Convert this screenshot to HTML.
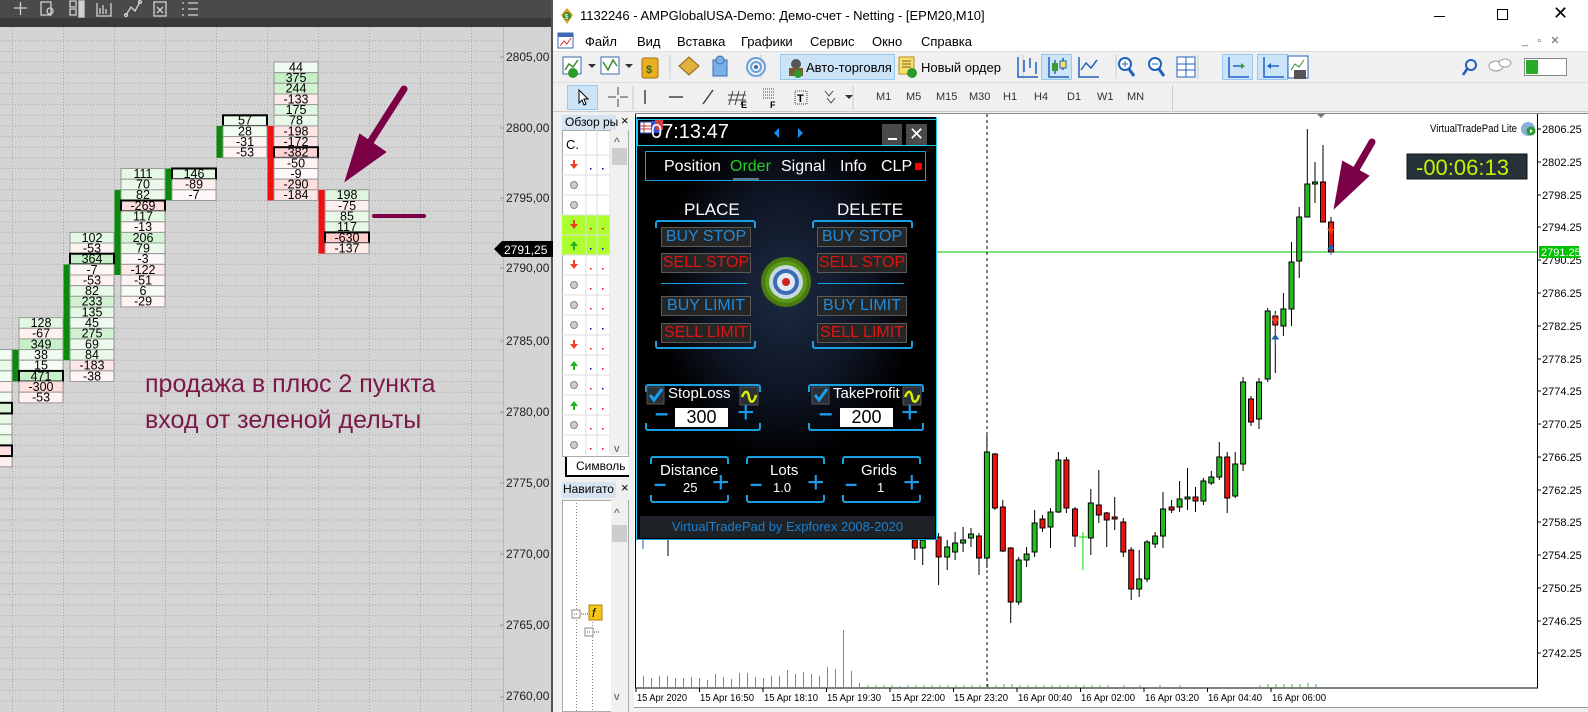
<!DOCTYPE html>
<html><head><meta charset="utf-8">
<style>
*{margin:0;padding:0;box-sizing:border-box}
body{width:1588px;height:712px;overflow:hidden;background:#f0f0f0;font-family:"Liberation Sans","DejaVu Sans",sans-serif;position:relative}
.a{position:absolute;white-space:nowrap}
.mi{font-size:13px;color:#000;top:34px}
.tf{font-size:11px;color:#333;top:91px}
.btn{position:absolute;width:90px;height:20px;background:#262626;border:1px solid #5a5a5a;font-size:16px;line-height:18px;text-align:center;color:#1e8ce0}
.btn.r{color:#e01414}
.brk{position:absolute;border:2px solid #1aa0e0;height:8px}
.brk.t{border-bottom:none;border-radius:3px 3px 0 0}
.brk.b{border-top:none;border-radius:0 0 3px 3px}
.pm{position:absolute;color:#1a9be8;font-weight:bold}
.wt{color:#fff;position:absolute;white-space:nowrap}
</style></head><body>

<!-- LEFT FOOTPRINT PANEL -->
<div class="a" style="left:0;top:0;width:551px;height:712px;background:#d4d4d4"></div>
<div class="a" style="left:0;top:0;width:551px;height:18px;background:#4a4a4a"></div>
<div class="a" style="left:0;top:18px;width:551px;height:9px;background:#3a3a3a"></div>
<div class="a" style="left:551px;top:0;width:2px;height:712px;background:#555"></div>

<svg class="a" style="left:0;top:0" width="553" height="712" xmlns="http://www.w3.org/2000/svg" font-family="Liberation Sans, sans-serif">
<g stroke="#d0d0d0" stroke-width="1.3" fill="none">
<path d="M14 8h13M20.5 2v13"/>
<rect x="41" y="2" width="10" height="13"/><circle cx="50" cy="11" r="3"/>
<path d="M70 1h6v6h-6zM70 9h6v6h-6z"/><rect x="79" y="1" width="5" height="16" fill="#d0d0d0"/>
<path d="M97 3v13h14v-13M100 14v-6M103 14v-9M106 14v-5"/>
<path d="M126 15l5-8 4 4 5-9"/><circle cx="126" cy="15" r="1.5"/><circle cx="140" cy="2" r="1.5"/>
<rect x="154" y="2" width="12" height="14"/><path d="M157 7l6 6M163 7l-6 6"/>
<path d="M182 3h2M182 9h2M182 15h2M188 3h10M188 9h10M188 15h10"/>
</g>
<g stroke="#a8a8a8" stroke-width="1" stroke-dasharray="1,2">
<path d="M12.5 27V712M63.5 27V712M114.5 27V712M165.5 27V712M216.5 27V712M267.5 27V712M318.5 27V712M369.5 27V712M420.5 27V712M471.5 27V712"/>
<path d="M0 40.7H503M0 51.4H503M0 62H503M0 72.7H503M0 83.3H503M0 94H503M0 104.6H503M0 115.3H503M0 125.9H503M0 136.6H503M0 147.2H503M0 157.9H503M0 168.5H503M0 179.2H503M0 189.8H503M0 200.5H503M0 211.1H503M0 221.8H503M0 232.4H503M0 243H503M0 253.7H503M0 264.4H503M0 275H503M0 285.7H503M0 296.3H503M0 307H503M0 317.6H503M0 328.3H503M0 338.9H503M0 349.6H503M0 360.2H503M0 370.9H503M0 381.5H503M0 392.2H503M0 402.8H503M0 413.5H503M0 424.1H503M0 434.8H503M0 445.4H503M0 456.1H503M0 466.7H503M0 477.4H503M0 488H503M0 498.7H503M0 509.3H503M0 520H503M0 530.6H503M0 541.3H503M0 551.9H503M0 562.6H503M0 573.2H503M0 583.9H503M0 594.5H503M0 605.2H503M0 615.8H503M0 626.5H503M0 637.1H503M0 647.8H503M0 658.4H503M0 669.1H503M0 679.7H503M0 690.4H503M0 701H503"/>
</g>
<path d="M503.5 27V712" stroke="#b8b8b8"/>
<g font-size="12" fill="#222">
<text x="506" y="61">2805,00</text><text x="506" y="132">2800,00</text><text x="506" y="202">2795,00</text><text x="506" y="272">2790,00</text>
<text x="506" y="345">2785,00</text><text x="506" y="416">2780,00</text><text x="506" y="487">2775,00</text><text x="506" y="558">2770,00</text>
<text x="506" y="629">2765,00</text><text x="506" y="700">2760,00</text>
</g>
<g stroke="#999"><path d="M500 57h4M500 128h4M500 198h4M500 268h4M500 341h4M500 412h4M500 483h4M500 554h4M500 625h4M500 697h4"/></g>
<path d="M494 249l8-8h51v16h-51z" fill="#000"/>
<text x="504" y="254" font-size="12" fill="#fff">2791,25</text>

<rect x="12.5" y="349.6" width="6" height="31.9" fill="#0a8a0a"/>
<rect x="63.5" y="264.4" width="6" height="95.8" fill="#0a8a0a"/>
<rect x="114.5" y="189.8" width="6" height="85.2" fill="#0a8a0a"/>
<rect x="165.5" y="168.5" width="6" height="31.9" fill="#0a8a0a"/>
<rect x="216.5" y="125.9" width="6" height="31.9" fill="#0a8a0a"/>
<rect x="267.5" y="125.9" width="6" height="74.6" fill="#f01010"/>
<rect x="318.5" y="189.8" width="6" height="63.9" fill="#f01010"/>

<g font-size="12.5" text-anchor="middle" stroke-width="1">
<g stroke="#999">
<rect x="-30" y="349.6" width="42" height="10.65" fill="#f2fdf2"/><rect x="-30" y="360.2" width="42" height="10.65" fill="#e6fae6"/>
<rect x="-30" y="370.9" width="42" height="10.65" fill="#f2fdf2"/><rect x="-30" y="381.5" width="42" height="10.65" fill="#fff0f0"/>
<rect x="-30" y="392.2" width="42" height="10.65" fill="#f2fdf2"/><rect x="-30" y="413.5" width="42" height="10.65" fill="#e6fae6"/>
<rect x="-30" y="424.1" width="42" height="10.65" fill="#f2fdf2"/><rect x="-30" y="434.8" width="42" height="10.65" fill="#e6fae6"/>
<rect x="-30" y="456.1" width="42" height="10.65" fill="#fff0f0"/>
</g>
<rect x="-30" y="402.8" width="42" height="10.65" fill="#d8f5d8" stroke="#000" stroke-width="2"/>
<rect x="-30" y="445.4" width="42" height="10.65" fill="#ffe0e0" stroke="#000" stroke-width="2"/>

<g transform="translate(19,0)">
<rect y="317.6" width="44" height="10.65" fill="#e2f8e2" stroke="#999"/><text x="22" y="327">128</text>
<rect y="328.3" width="44" height="10.65" fill="#fff0f0" stroke="#999"/><text x="22" y="337.7">-67</text>
<rect y="338.9" width="44" height="10.65" fill="#c8f0c8" stroke="#999"/><text x="22" y="348.3">349</text>
<rect y="349.6" width="44" height="10.65" fill="#f0fcf0" stroke="#999"/><text x="22" y="359">38</text>
<rect y="360.2" width="44" height="10.65" fill="#f4fdf4" stroke="#999"/><text x="22" y="369.6">15</text>
<rect y="370.9" width="44" height="10.65" fill="#c8f0c8" stroke="#000" stroke-width="2"/><text x="22" y="380.3">471</text>
<rect y="381.5" width="44" height="10.65" fill="#ffdede" stroke="#999"/><text x="22" y="390.9">-300</text>
<rect y="392.2" width="44" height="10.65" fill="#fff2f2" stroke="#999"/><text x="22" y="401.6">-53</text>
</g>
<g transform="translate(70,0)">
<rect y="232.4" width="44" height="10.65" fill="#e4f8e4" stroke="#999"/><text x="22" y="241.8">102</text>
<rect y="243" width="44" height="10.65" fill="#fff2f2" stroke="#999"/><text x="22" y="252.4">-53</text>
<rect y="253.7" width="44" height="10.65" fill="#c8f0c8" stroke="#000" stroke-width="2"/><text x="22" y="263.1">364</text>
<rect y="264.4" width="44" height="10.65" fill="#fff6f6" stroke="#999"/><text x="22" y="273.8">-7</text>
<rect y="275" width="44" height="10.65" fill="#fff2f2" stroke="#999"/><text x="22" y="284.4">-53</text>
<rect y="285.7" width="44" height="10.65" fill="#e8f9e8" stroke="#999"/><text x="22" y="295.1">82</text>
<rect y="296.3" width="44" height="10.65" fill="#d2f3d2" stroke="#999"/><text x="22" y="305.7">233</text>
<rect y="307" width="44" height="10.65" fill="#e2f8e2" stroke="#999"/><text x="22" y="316.4">135</text>
<rect y="317.6" width="44" height="10.65" fill="#f0fcf0" stroke="#999"/><text x="22" y="327">45</text>
<rect y="328.3" width="44" height="10.65" fill="#d0f2d0" stroke="#999"/><text x="22" y="337.7">275</text>
<rect y="338.9" width="44" height="10.65" fill="#ecfaec" stroke="#999"/><text x="22" y="348.3">69</text>
<rect y="349.6" width="44" height="10.65" fill="#e8f9e8" stroke="#999"/><text x="22" y="359">84</text>
<rect y="360.2" width="44" height="10.65" fill="#ffe6e6" stroke="#999"/><text x="22" y="369.6">-183</text>
<rect y="370.9" width="44" height="10.65" fill="#fff4f4" stroke="#999"/><text x="22" y="380.3">-38</text>
</g>
<g transform="translate(121,0)">
<rect y="168.5" width="44" height="10.65" fill="#e4f8e4" stroke="#999"/><text x="22" y="177.9">111</text>
<rect y="179.2" width="44" height="10.65" fill="#eafaea" stroke="#999"/><text x="22" y="188.6">70</text>
<rect y="189.8" width="44" height="10.65" fill="#e8f9e8" stroke="#999"/><text x="22" y="199.2">82</text>
<rect y="200.5" width="44" height="10.65" fill="#ffdcdc" stroke="#000" stroke-width="2"/><text x="22" y="209.9">-269</text>
<rect y="211.1" width="44" height="10.65" fill="#e4f8e4" stroke="#999"/><text x="22" y="220.5">117</text>
<rect y="221.8" width="44" height="10.65" fill="#fff6f6" stroke="#999"/><text x="22" y="231.2">-13</text>
<rect y="232.4" width="44" height="10.65" fill="#d4f4d4" stroke="#999"/><text x="22" y="241.8">206</text>
<rect y="243" width="44" height="10.65" fill="#eafaea" stroke="#999"/><text x="22" y="252.4">79</text>
<rect y="253.7" width="44" height="10.65" fill="#fff8f8" stroke="#999"/><text x="22" y="263.1">-3</text>
<rect y="264.4" width="44" height="10.65" fill="#ffeaea" stroke="#999"/><text x="22" y="273.8">-122</text>
<rect y="275" width="44" height="10.65" fill="#fff2f2" stroke="#999"/><text x="22" y="284.4">-51</text>
<rect y="285.7" width="44" height="10.65" fill="#f6fdf6" stroke="#999"/><text x="22" y="295.1">6</text>
<rect y="296.3" width="44" height="10.65" fill="#fff4f4" stroke="#999"/><text x="22" y="305.7">-29</text>
</g>
<g transform="translate(172,0)">
<rect y="168.5" width="44" height="10.65" fill="#e2f8e2" stroke="#000" stroke-width="2"/><text x="22" y="177.9">146</text>
<rect y="179.2" width="44" height="10.65" fill="#ffeeee" stroke="#999"/><text x="22" y="188.6">-89</text>
<rect y="189.8" width="44" height="10.65" fill="#fff8f8" stroke="#999"/><text x="22" y="199.2">-7</text>
</g>
<g transform="translate(223,0)">
<rect y="115.3" width="44" height="10.65" fill="#eefbee" stroke="#000" stroke-width="2"/><text x="22" y="124.7">57</text>
<rect y="125.9" width="44" height="10.65" fill="#f2fcf2" stroke="#999"/><text x="22" y="135.3">28</text>
<rect y="136.6" width="44" height="10.65" fill="#fff4f4" stroke="#999"/><text x="22" y="146">-31</text>
<rect y="147.2" width="44" height="10.65" fill="#fff2f2" stroke="#999"/><text x="22" y="156.6">-53</text>
</g>
<g transform="translate(274,0)">
<rect y="62" width="44" height="10.65" fill="#f0fcf0" stroke="#999"/><text x="22" y="71.4">44</text>
<rect y="72.7" width="44" height="10.65" fill="#c8f0c8" stroke="#999"/><text x="22" y="82.1">375</text>
<rect y="83.3" width="44" height="10.65" fill="#d2f3d2" stroke="#999"/><text x="22" y="92.7">244</text>
<rect y="94" width="44" height="10.65" fill="#ffeaea" stroke="#999"/><text x="22" y="103.4">-133</text>
<rect y="104.6" width="44" height="10.65" fill="#e0f7e0" stroke="#999"/><text x="22" y="114">175</text>
<rect y="115.3" width="44" height="10.65" fill="#eafaea" stroke="#999"/><text x="22" y="124.7">78</text>
<rect y="125.9" width="44" height="10.65" fill="#ffe4e4" stroke="#999"/><text x="22" y="135.3">-198</text>
<rect y="136.6" width="44" height="10.65" fill="#ffe6e6" stroke="#999"/><text x="22" y="146">-172</text>
<rect y="147.2" width="44" height="10.65" fill="#ffd4d4" stroke="#000" stroke-width="2"/><text x="22" y="156.6">-382</text>
<rect y="157.9" width="44" height="10.65" fill="#fff4f4" stroke="#999"/><text x="22" y="167.3">-50</text>
<rect y="168.5" width="44" height="10.65" fill="#fff8f8" stroke="#999"/><text x="22" y="177.9">-9</text>
<rect y="179.2" width="44" height="10.65" fill="#ffdede" stroke="#999"/><text x="22" y="188.6">-290</text>
<rect y="189.8" width="44" height="10.65" fill="#ffe6e6" stroke="#999"/><text x="22" y="199.2">-184</text>
</g>
<g transform="translate(325,0)">
<rect y="189.8" width="44" height="10.65" fill="#e0f7e0" stroke="#999"/><text x="22" y="199.2">198</text>
<rect y="200.5" width="44" height="10.65" fill="#fff0f0" stroke="#999"/><text x="22" y="209.9">-75</text>
<rect y="211.1" width="44" height="10.65" fill="#e8f9e8" stroke="#999"/><text x="22" y="220.5">85</text>
<rect y="221.8" width="44" height="10.65" fill="#e4f8e4" stroke="#999"/><text x="22" y="231.2">117</text>
<rect y="232.4" width="44" height="10.65" fill="#ffcccc" stroke="#000" stroke-width="2"/><text x="22" y="241.8">-630</text>
<rect y="243" width="44" height="10.65" fill="#ffeaea" stroke="#999"/><text x="22" y="252.4">-137</text>
</g>
</g>
<g stroke="#7b0046" stroke-linecap="round" fill="#7b0046">
<path d="M404 89L360 158" stroke-width="7"/>
<path d="M346 180L360 135L385 152z" stroke-width="2"/>
<path d="M374 216H424" stroke-width="4"/>
</g>
<text x="145" y="392" font-size="25" fill="#7a1848">продажа в плюс 2 пункта</text>
<text x="145" y="428" font-size="25" fill="#7a1848">вход от зеленой дельты</text>
</svg>

<!-- MT WINDOW -->
<div class="a" style="left:553px;top:0;width:1035px;height:31px;background:#fff"></div>
<svg class="a" style="left:559px;top:7px" width="16" height="18"><path d="M8 1l6 7-6 9-6-9z" fill="#e0a020"/><circle cx="8" cy="9" r="4" fill="#3a8a30"/><text x="5.5" y="12" font-size="7" fill="#fff">$</text></svg>
<div class="a" style="left:580px;top:8px;font-size:13px;color:#000">1132246 - AMPGlobalUSA-Demo: Демо-счет - Netting - [EPM20,M10]</div>
<div class="a" style="left:1434px;top:16px;width:11px;height:1px;background:#000"></div>
<div class="a" style="left:1497px;top:9px;width:11px;height:11px;border:1px solid #000"></div>
<div class="a" style="left:1553px;top:3px;font-size:18px;color:#000">✕</div>
<div class="a" style="left:553px;top:31px;width:1035px;height:20px;background:#fff"></div>
<svg class="a" style="left:557px;top:32px" width="18" height="17"><rect x="1" y="1" width="15" height="15" fill="#fff" stroke="#3a6ab0"/><rect x="1" y="1" width="15" height="4" fill="#3a6ab0"/><path d="M3 14l4-5 3 3 4-6" stroke="#e03030" fill="none"/></svg>
<div class="a mi" style="left:585px">Файл</div>
<div class="a mi" style="left:637px">Вид</div>
<div class="a mi" style="left:677px">Вставка</div>
<div class="a mi" style="left:741px">Графики</div>
<div class="a mi" style="left:810px">Сервис</div>
<div class="a mi" style="left:872px">Окно</div>
<div class="a mi" style="left:921px">Справка</div>
<div class="a" style="left:1522px;top:34px;font-size:11px;color:#666">_ &nbsp; ▫ &nbsp; ✕</div>

<div class="a" style="left:553px;top:51px;width:1035px;height:1px;background:#ddd"></div>
<svg class="a" style="left:553px;top:52px" width="1035" height="60">
<g>
<rect x="10" y="5" width="18" height="17" fill="#fff" stroke="#3a6ab0"/><path d="M12 18l4-6 4 3 5-7" stroke="#3a8a30" fill="none" stroke-width="1.5"/><circle cx="20" cy="21" r="5" fill="#2a9a2a"/>
<path d="M35 12l4 4 4-4z" fill="#333"/>
<rect x="48" y="5" width="18" height="17" fill="#fff" stroke="#3a6ab0"/><path d="M50 10l5 8 5-10 4 6" stroke="#3a8a30" fill="none" stroke-width="1.5"/>
<path d="M72 12l4 4 4-4z" fill="#333"/>
<rect x="89" y="6" width="16" height="20" rx="2" fill="#e8b020" stroke="#a07010"/><text x="93" y="21" font-size="11" fill="#2a6a20" font-weight="bold">$</text>
<path d="M117 3v24M208 3v24M470 3v24M563 3v24M645 3v24M731 3v24" stroke="#ccc"/>
<path d="M126 14l10-9 10 9-10 9z" fill="#e0b040" stroke="#906010"/>
<rect x="160" y="8" width="14" height="16" fill="#7ab0e8" stroke="#3a6ab0"/><circle cx="167" cy="8" r="4" fill="#7ab0e8" stroke="#3a6ab0"/>
<circle cx="203" cy="15" r="9" fill="none" stroke="#6aa0e0" stroke-width="2"/><circle cx="203" cy="15" r="5" fill="none" stroke="#6aa0e0" stroke-width="2"/><circle cx="203" cy="15" r="2" fill="#3a6ab0"/>
</g>
<rect x="227.5" y="2.5" width="114" height="25" fill="#cce4f7" stroke="#99c9ef"/>
<circle cx="243" cy="12" r="5" fill="#555"/><rect x="236" y="16" width="14" height="8" fill="#7a5a30"/><circle cx="245" cy="22" r="4" fill="#2a9a2a"/>
<text x="253" y="20" font-size="13" fill="#000">Авто-торговля</text>
<rect x="346" y="5" width="15" height="17" fill="#f8e070" stroke="#b09020"/><path d="M349 9h9M349 12h9M349 15h9" stroke="#806010"/><circle cx="359" cy="21" r="5" fill="#2a9a2a"/>
<text x="368" y="20" font-size="13" fill="#000">Новый ордер</text>
<path d="M465 5v20h20M471 8v12M477 6v10M483 10v12" stroke="#2060c0" stroke-width="1.5" fill="none"/>
<rect x="488.5" y="2.5" width="30" height="25" fill="#cce4f7" stroke="#99c9ef"/>
<path d="M496 5v20h20M502 8v14M510 6v12" stroke="#2060c0" stroke-width="1.5" fill="none"/><rect x="499" y="11" width="6" height="8" fill="#3a9a3a"/><rect x="507" y="9" width="6" height="7" fill="#f8e060" stroke="#2060c0"/>
<path d="M526 5v20h20M528 18l5-7 5 5 6-8" stroke="#2060c0" stroke-width="1.5" fill="none"/>
<circle cx="572" cy="12" r="6" fill="#fff" stroke="#2060c0" stroke-width="2"/><path d="M576 17l5 7" stroke="#2060c0" stroke-width="3"/><path d="M569 12h6M572 9v6" stroke="#2060c0"/>
<circle cx="602" cy="12" r="6" fill="#fff" stroke="#2060c0" stroke-width="2"/><path d="M606 17l5 7" stroke="#2060c0" stroke-width="3"/><path d="M599 12h6" stroke="#2060c0"/>
<rect x="624" y="5" width="18" height="20" fill="#fff" stroke="#2060c0"/><path d="M624 12h18M624 18h18M633 5v20" stroke="#2060c0"/>
<rect x="669.5" y="2.5" width="30" height="25" fill="#cce4f7" stroke="#99c9ef"/>
<rect x="704.5" y="2.5" width="30" height="25" fill="#cce4f7" stroke="#99c9ef"/>
<path d="M676 5v20h20M680 14h10" stroke="#2060c0" stroke-width="1.5" fill="none"/><path d="M688 11l4 3-4 3z" fill="#3a9a3a"/>
<path d="M711 5v20h20M716 14h10" stroke="#2060c0" stroke-width="1.5" fill="none"/><path d="M718 11l-4 3 4 3z" fill="#2060c0"/>
<rect x="735" y="4" width="20" height="22" fill="#fff" stroke="#2060c0"/><path d="M738 18l4-6 4 3 5-7" stroke="#3a8a30" fill="none"/><rect x="741" y="18" width="12" height="9" fill="#555"/>
<circle cx="918" cy="13" r="5" fill="none" stroke="#2060c0" stroke-width="2"/><path d="M914 17l-4 6" stroke="#2060c0" stroke-width="2.5"/>
<ellipse cx="943" cy="14" rx="7" ry="5" fill="#fff" stroke="#999"/><ellipse cx="952" cy="11" rx="6" ry="4" fill="#fff" stroke="#999"/>
<rect x="971.5" y="6.5" width="42" height="17" fill="#fff" stroke="#888"/><rect x="973" y="8" width="12" height="14" fill="#2aaa2a"/>
</svg>
<div class="a" style="left:553px;top:82px;width:1035px;height:1px;background:#ddd"></div>
<svg class="a" style="left:553px;top:83px" width="620" height="28">
<rect x="14.5" y="2.5" width="30" height="24" fill="#cce4f7" stroke="#99c9ef"/>
<path d="M26 7v13l3-3 2 5 2-1-2-5h4z" fill="#fff" stroke="#000"/>
<path d="M55 14h8M67 14h8M65 4v8M65 16v8" stroke="#444"/>
<path d="M80 3v24M300 3v24" stroke="#ccc"/>
<path d="M92 7v14M116 14h14M150 21l10-14" stroke="#444" stroke-width="1.5"/>
<path d="M176 22l4-14M182 22l4-14M188 22l4-14M175 12h18M175 17h18" stroke="#444"/><text x="188" y="25" font-size="9" font-weight="bold">E</text>
<path d="M210 6h12M210 9h12M210 12h12M210 15h12" stroke="#444" stroke-dasharray="1,1"/><text x="217" y="25" font-size="9" font-weight="bold">F</text>
<rect x="242" y="8" width="12" height="13" fill="none" stroke="#444" stroke-dasharray="1,1"/><text x="244" y="19" font-size="11" font-weight="bold">T</text>
<path d="M272 8l4 5 4-5M274 15l4 5 4-5" stroke="#444" fill="none"/><path d="M292 12l4 4 4-4z" fill="#333"/>
</svg>
<div class="a tf" style="left:876px">M1</div><div class="a tf" style="left:906px">M5</div>
<div class="a tf" style="left:936px">M15</div><div class="a tf" style="left:969px">M30</div>
<div class="a tf" style="left:1003px">H1</div><div class="a tf" style="left:1034px">H4</div>
<div class="a tf" style="left:1067px">D1</div><div class="a tf" style="left:1097px">W1</div>
<div class="a tf" style="left:1127px">MN</div>
<div class="a" style="left:1172px;top:85px;width:1px;height:25px;background:#ccc"></div>
<div class="a" style="left:553px;top:111px;width:1035px;height:1px;background:#ccc"></div>

<!-- MARKET WATCH -->
<div class="a" style="left:562px;top:115px;width:54px;height:15px;background:#d6e4f2"></div>
<div class="a" style="left:565px;top:115px;font-size:12px">Обзор ры</div>
<div class="a" style="left:621px;top:113px;font-size:13px">×</div>
<div class="a" style="left:562px;top:130px;width:67px;height:327px;background:#fff;border:1px solid #aaa"></div>
<svg class="a" style="left:562px;top:130px" width="67" height="327" font-family="Liberation Sans, sans-serif">
<rect x="0" y="85" width="48" height="40" fill="#adff2f"/>
<g stroke="#ddd"><path d="M24 0V325M35 0V325M48 0V325"/><path d="M0 25H48M0 45H48M0 65H48M0 85H48M0 105H48M0 125H48M0 145H48M0 165H48M0 185H48M0 205H48M0 225H48M0 245H48M0 265H48M0 285H48M0 305H48"/></g>
<text x="4" y="19" font-size="13">C.</text>
<rect x="49" y="0" width="17" height="325" fill="#f0f0f0"/>
<text x="52" y="16" font-size="12" fill="#555">^</text>
<rect x="50" y="18" width="15" height="17" fill="#cdcdcd"/>
<text x="52" y="322" font-size="11" fill="#555">v</text>
<path d="M11 30v4h-3l4 5 4-5h-3v-4z" fill="#f04020"/>
<circle cx="12" cy="55" r="3.5" fill="#ccc" stroke="#888"/>
<circle cx="12" cy="75" r="3.5" fill="#ccc" stroke="#888"/>
<path d="M11 90v4h-3l4 5 4-5h-3v-4z" fill="#f04020"/>
<path d="M11 120v-4h-3l4-5 4 5h-3v4z" fill="#20b020"/>
<path d="M11 130v4h-3l4 5 4-5h-3v-4z" fill="#f04020"/>
<circle cx="12" cy="155" r="3.5" fill="#ccc" stroke="#888"/>
<circle cx="12" cy="175" r="3.5" fill="#ccc" stroke="#888"/>
<circle cx="12" cy="195" r="3.5" fill="#ccc" stroke="#888"/>
<path d="M11 210v4h-3l4 5 4-5h-3v-4z" fill="#f04020"/>
<path d="M11 240v-4h-3l4-5 4 5h-3v4z" fill="#20b020"/>
<circle cx="12" cy="255" r="3.5" fill="#ccc" stroke="#888"/>
<path d="M11 280v-4h-3l4-5 4 5h-3v4z" fill="#20b020"/>
<circle cx="12" cy="295" r="3.5" fill="#ccc" stroke="#888"/>
<circle cx="12" cy="315" r="3.5" fill="#ccc" stroke="#888"/>
<g fill="#e00"><rect x="28" y="38" width="1.5" height="1.5" fill="#00c"/><rect x="40" y="38" width="1.5" height="1.5" fill="#00c"/>
<rect x="28" y="98" width="1.5" height="1.5"/><rect x="40" y="98" width="1.5" height="1.5"/>
<rect x="28" y="118" width="1.5" height="1.5" fill="#00c"/><rect x="40" y="118" width="1.5" height="1.5" fill="#00c"/>
<rect x="28" y="138" width="1.5" height="1.5"/><rect x="40" y="138" width="1.5" height="1.5"/>
<rect x="28" y="158" width="1.5" height="1.5"/><rect x="40" y="158" width="1.5" height="1.5"/>
<rect x="28" y="178" width="1.5" height="1.5"/><rect x="40" y="178" width="1.5" height="1.5"/>
<rect x="28" y="198" width="1.5" height="1.5" fill="#00c"/><rect x="40" y="198" width="1.5" height="1.5" fill="#00c"/>
<rect x="28" y="218" width="1.5" height="1.5"/><rect x="40" y="218" width="1.5" height="1.5"/>
<rect x="28" y="238" width="1.5" height="1.5" fill="#00c"/><rect x="40" y="238" width="1.5" height="1.5"/>
<rect x="28" y="258" width="1.5" height="1.5"/><rect x="40" y="258" width="1.5" height="1.5" fill="#00c"/>
<rect x="28" y="278" width="1.5" height="1.5"/><rect x="40" y="278" width="1.5" height="1.5"/>
<rect x="28" y="298" width="1.5" height="1.5"/><rect x="40" y="298" width="1.5" height="1.5"/>
<rect x="28" y="318" width="1.5" height="1.5"/><rect x="40" y="318" width="1.5" height="1.5"/></g>
</svg>
<div class="a" style="left:565px;top:457px;width:64px;height:20px;background:#fff;border-left:2px solid #000;border-bottom:2px solid #000"></div>
<div class="a" style="left:576px;top:459px;font-size:12px">Символь</div>
<div class="a" style="left:562px;top:482px;width:54px;height:16px;background:#d6e4f2"></div>
<div class="a" style="left:563px;top:482px;font-size:12px">Навигато</div>
<div class="a" style="left:621px;top:480px;font-size:13px">×</div>
<div class="a" style="left:562px;top:500px;width:67px;height:212px;background:#fff;border:1px solid #aaa"></div>
<svg class="a" style="left:562px;top:500px" width="67" height="212">
<path d="M14.5 3V212M30.5 110V212" stroke="#888" stroke-dasharray="1,2"/>
<rect x="49" y="0" width="17" height="212" fill="#f0f0f0"/>
<text x="52" y="17" font-size="12" fill="#555">^</text>
<rect x="50" y="25" width="15" height="17" fill="#cdcdcd"/>
<text x="52" y="200" font-size="11" fill="#555">v</text>
<rect x="10" y="110" width="8" height="8" fill="#fff" stroke="#888"/><path d="M12 114h4M19 114h8" stroke="#555" stroke-dasharray="1,1"/>
<rect x="27" y="105" width="13" height="15" fill="#f5c518" stroke="#b08000"/><text x="30" y="117" font-size="12" font-style="italic">f</text>
<rect x="23" y="128" width="8" height="8" fill="#fff" stroke="#888"/><path d="M25 132h4M32 132h6" stroke="#555" stroke-dasharray="1,1"/>
</svg>

<!-- CHART -->
<div class="a" style="left:634px;top:113px;width:954px;height:594px;background:#fff"></div>
<div class="a" style="left:634px;top:707px;width:954px;height:5px;background:#f0f0f0;border-top:1px solid #999"></div>
<svg class="a" style="left:0;top:0" width="1588" height="712" font-family="Liberation Sans, sans-serif">
<path d="M635 113.5H1588" stroke="#888"/>
<path d="M635.5 114V688H1537.5V114" stroke="#000" fill="none"/>
<path d="M636 252H1537" stroke="#00c000"/>
<path d="M987 114V688" stroke="#000" stroke-dasharray="3,3"/>
<g font-size="11" fill="#000">
<text x="1542" y="133">2806.25</text><text x="1542" y="166">2802.25</text><text x="1542" y="199">2798.25</text><text x="1542" y="231">2794.25</text>
<text x="1542" y="264">2790.25</text><text x="1542" y="297">2786.25</text><text x="1542" y="330">2782.25</text><text x="1542" y="363">2778.25</text>
<text x="1542" y="395">2774.25</text><text x="1542" y="428">2770.25</text><text x="1542" y="461">2766.25</text><text x="1542" y="494">2762.25</text>
<text x="1542" y="526">2758.25</text><text x="1542" y="559">2754.25</text><text x="1542" y="592">2750.25</text><text x="1542" y="625">2746.25</text>
<text x="1542" y="657">2742.25</text>
</g>
<g stroke="#000"><path d="M1537 129h4M1537 162h4M1537 195h4M1537 227h4M1537 260h4M1537 293h4M1537 326h4M1537 359h4M1537 391h4M1537 424h4M1537 457h4M1537 490h4M1537 522h4M1537 555h4M1537 588h4M1537 621h4M1537 653h4"/></g>
<rect x="1539" y="246" width="40" height="12" fill="#00c000"/>
<text x="1541" y="256" font-size="11" fill="#fff">2791.25</text>
<g font-size="10" fill="#000">
<text x="637" y="701" textLength="50" lengthAdjust="spacingAndGlyphs">15 Apr 2020</text>
<text x="700" y="701" textLength="54" lengthAdjust="spacingAndGlyphs">15 Apr 16:50</text>
<text x="764" y="701" textLength="54" lengthAdjust="spacingAndGlyphs">15 Apr 18:10</text>
<text x="827" y="701" textLength="54" lengthAdjust="spacingAndGlyphs">15 Apr 19:30</text>
<text x="891" y="701" textLength="54" lengthAdjust="spacingAndGlyphs">15 Apr 22:00</text>
<text x="954" y="701" textLength="54" lengthAdjust="spacingAndGlyphs">15 Apr 23:20</text>
<text x="1018" y="701" textLength="54" lengthAdjust="spacingAndGlyphs">16 Apr 00:40</text>
<text x="1081" y="701" textLength="54" lengthAdjust="spacingAndGlyphs">16 Apr 02:00</text>
<text x="1145" y="701" textLength="54" lengthAdjust="spacingAndGlyphs">16 Apr 03:20</text>
<text x="1208" y="701" textLength="54" lengthAdjust="spacingAndGlyphs">16 Apr 04:40</text>
<text x="1272" y="701" textLength="54" lengthAdjust="spacingAndGlyphs">16 Apr 06:00</text>
</g>
<g stroke="#000"><path d="M636 688v4M699.5 688v4M763 688v4M826.5 688v4M890 688v4M953.5 688v4M1017 688v4M1080.5 688v4M1144 688v4M1207.5 688v4M1271 688v4"/></g>
<g stroke="#30c030" stroke-width="1">
<path d="M643.5 687V676M651.5 687V678M659.5 687V676M667.5 687V676M675.5 687V678M683.5 687V678M691.5 687V677M699.5 687V678M707.5 687V680M715.5 687V674M723.5 687V677M731.5 687V679M739.5 687V673M747.5 687V673M755.5 687V677M763.5 687V678M771.5 687V676M779.5 687V676M787.5 687V670M795.5 687V674M803.5 687V672M811.5 687V674M819.5 687V676M827.5 687V667M835.5 687V669M843.5 687V630M851.5 687V671M859.5 687V683"/>
<path d="M868 687V685M876 687V685M884 687V685M892 687V685M900 687V686M908 687V685M916 687V685M924 687V685M932 687V685M940 687V685M948 687V685M956 687V685M964 687V685M972 687V685M980 687V685M988 687V684M996 687V685M1004 687V684M1012 687V684M1020 687V685M1028 687V685M1036 687V685M1044 687V685M1052 687V685M1060 687V685M1068 687V685M1076 687V685M1084 687V685M1092 687V685M1100 687V685M1108 687V685M1124 687V685M1140 687V685M1160 687V685M1180 687V685M1260 687V685M1268 687V684M1276 687V684M1284 687V684M1292 687V684M1300 687V684M1308 687V683M1316 687V684"/>
</g>
<g stroke="#000" stroke-width="1">
<path d="M914.8 535V560M922.7 535V565M938.6 533V585M947.2 540V570M955.1 532V560M963.1 527V552M971 528V547M979 533V575M986.9 435V568M994.9 453V510M1002.8 500V552M1010.7 547V623M1018.7 557V605M1026.6 547V567M1034.6 510V557M1042.5 515V532M1050.5 508V548M1058.4 452V513M1066.4 457V513M1075 507V547M1090.8 489V555M1098.8 470V523M1106.7 512V547M1114.7 497V530M1123.3 518V557M1131.2 547V600M1139.2 550V597M1147.1 540V582M1155.1 532V548M1163 492V548M1171.6 500V513M1179.6 481V512M1187.5 468V510M1195.5 487V512M1203.4 478V505M1211.3 471V485M1219.3 442V480M1227.2 452V513M1235.2 452V498M1243.1 377V471M1251 396V426M1259 378V429M1267.7 308V382M1275.3 311V373M1283.4 293V336M1291.5 242V326M1299.2 207V278M1307.3 129V217M1315 162V203M1323 145V222M1331 217V252M668 533V556"/>
</g>
<path d="M1082.9 532V570M1079 537H1087" stroke="#00e000"/>
<g stroke="#000" stroke-width="1">
<g fill="#ee1010">
<rect x="912.3" y="540" width="5" height="8"/><rect x="936.1" y="537" width="5" height="20"/><rect x="976.5" y="536" width="5" height="22"/>
<rect x="992.4" y="454" width="5" height="54"/><rect x="1000.3" y="507" width="5" height="44"/><rect x="1008.2" y="548" width="5" height="54"/>
<rect x="1040" y="519" width="5" height="9"/><rect x="1063.9" y="460" width="5" height="48"/><rect x="1072.5" y="509" width="5" height="27"/>
<rect x="1096.3" y="505" width="5" height="10"/><rect x="1104.2" y="513" width="5" height="7"/><rect x="1112.2" y="517" width="5" height="2"/>
<rect x="1120.8" y="522" width="5" height="30"/><rect x="1128.7" y="550" width="5" height="39"/><rect x="1169.1" y="507" width="5" height="3"/>
<rect x="1193" y="497" width="5" height="4"/><rect x="1224.7" y="457" width="5" height="41"/><rect x="1248.5" y="399" width="5" height="23"/>
<rect x="1272.8" y="316" width="5" height="9"/><rect x="1320.5" y="182" width="5" height="40"/><rect x="1328.5" y="222" width="5" height="30"/>
</g>
<g fill="#22bb22">
<rect x="920.2" y="540" width="5" height="8"/><rect x="944.7" y="547" width="5" height="10"/><rect x="952.6" y="543" width="5" height="9"/>
<rect x="960.6" y="540" width="5" height="3"/><rect x="968.5" y="534" width="5" height="4"/><rect x="984.4" y="452" width="5" height="106"/>
<rect x="1016.2" y="560" width="5" height="42"/><rect x="1024.1" y="554" width="5" height="6"/><rect x="1032.1" y="523" width="5" height="29"/>
<rect x="1048" y="512" width="5" height="15"/><rect x="1055.9" y="460" width="5" height="52"/><rect x="1088.3" y="503" width="5" height="35"/>
<rect x="1136.7" y="579" width="5" height="10"/><rect x="1144.6" y="542" width="5" height="37"/><rect x="1152.6" y="536" width="5" height="8"/>
<rect x="1160.5" y="509" width="5" height="27"/><rect x="1177.1" y="499" width="5" height="8"/><rect x="1185" y="497" width="5" height="2"/>
<rect x="1200.9" y="481" width="5" height="20"/><rect x="1208.8" y="477" width="5" height="6"/><rect x="1216.8" y="457" width="5" height="20"/>
<rect x="1232.7" y="464" width="5" height="32"/><rect x="1240.6" y="382" width="5" height="82"/><rect x="1256.5" y="382" width="5" height="37"/>
<rect x="1265.2" y="311" width="5" height="68"/><rect x="1280.9" y="309" width="5" height="17"/><rect x="1289" y="262" width="5" height="47"/>
<rect x="1296.7" y="217" width="5" height="44"/><rect x="1304.8" y="184" width="5" height="33"/><rect x="1312.5" y="182" width="5" height="2"/>
</g>
</g>
<g>
<path d="M1275.3 313v6h-3l3 4 3-4h-3" fill="#f04010" stroke="#f04010"/>
<path d="M1275.3 345v-6h-3l3-4 3 4h-3" fill="#1a60b0" stroke="#1a60b0"/>
<path d="M1275.3 323V335" stroke="#f04010" stroke-dasharray="2,2"/>
<path d="M1331 223v6h-3l3 4 3-4h-3" fill="#f04010" stroke="#f04010"/>
<path d="M1331 255v-6h-3l3-4 3 4h-3" fill="#1a60b0" stroke="#1a60b0"/>
<path d="M643 545v-6h-3l3-4 3 4h-3v10" fill="#1a60b0" stroke="#1a60b0"/>
<path d="M1317 114l4 4 4-4z" fill="#777"/>
</g>
<g stroke="#7b0046" fill="#7b0046" stroke-linecap="round">
<path d="M1372 142L1350 180" stroke-width="7"/>
<path d="M1335 207L1343 162L1368 176z" stroke-width="2"/>
</g>
<text x="1430" y="132" font-size="11" fill="#000" textLength="87" lengthAdjust="spacingAndGlyphs">VirtualTradePad  Lite</text>
<circle cx="1528" cy="129" r="7" fill="#8ab0d8"/><circle cx="1531" cy="131" r="4.5" fill="#2a9a2a"/><path d="M1530 129l3 2-3 2z" fill="#fff"/>
<rect x="1407" y="154" width="120" height="25" fill="#26323a" stroke="#111"/>
<text x="1416" y="175" font-size="22" fill="#c8f000">-00:06:13</text>
</svg>

<!-- TRADE PAD -->
<div class="a" style="left:636px;top:117px;width:301px;height:423px;background:radial-gradient(ellipse 130px 170px at 150px 175px,#1c2a42 0%,#0e1524 60%,#000 100%)"></div>
<div class="a" style="left:636px;top:117px;width:301px;height:423px;border:1px solid #19d4ff;border-top:none;border-bottom:1px solid #1aa0e0"></div>
<div class="a" style="left:637px;top:119px;width:300px;height:27px;border:1px solid #19c8f0;background:#000"></div>
<svg class="a" style="left:640px;top:120px" width="24" height="16"><rect x="0" y="2" width="13" height="11" fill="#fff" stroke="#3050c0"/><path d="M0 6h13M0 9h13M4 2v11" stroke="#c03040"/><rect x="11" y="1" width="10" height="12" fill="#3050e0"/><rect x="15" y="0" width="8" height="10" fill="#d04040"/></svg>
<div class="wt" style="left:651px;top:121px;font-size:20px">07:13:47</div>
<svg class="a" style="left:774px;top:127px" width="30" height="12"><path d="M0 6l5-5v10z M24 1l5 5-5 5z" fill="#1a8ef0"/></svg>
<div class="a" style="left:882px;top:124px;width:20px;height:21px;background:#4a4a4a"></div>
<div class="a" style="left:888px;top:138px;width:9px;height:2px;background:#fff"></div>
<div class="a" style="left:906px;top:124px;width:21px;height:21px;background:#4a4a4a;color:#fff;font-size:18px;font-weight:bold;text-align:center;line-height:21px">✕</div>
<div class="a" style="left:645px;top:151px;width:281px;height:30px;border:1px solid #1aa0e0"></div>
<div class="wt" style="left:664px;top:158px;font-size:16px">Position</div>
<div class="a" style="left:730px;top:158px;font-size:16px;color:#22d022">Order</div>
<div class="a" style="left:733px;top:178px;width:26px;height:2px;background:#5a7a8a"></div>
<div class="wt" style="left:781px;top:158px;font-size:16px">Signal</div>
<div class="wt" style="left:840px;top:158px;font-size:16px">Info</div>
<div class="wt" style="left:881px;top:158px;font-size:16px">CLP</div>
<div class="a" style="left:915px;top:163px;width:7px;height:7px;background:#ff0000"></div>

<div class="wt" style="left:684px;top:200px;font-size:17px">PLACE</div>
<div class="wt" style="left:837px;top:200px;font-size:17px">DELETE</div>
<div class="brk t" style="left:655px;top:220px;width:101px"></div>
<div class="brk t" style="left:812px;top:220px;width:101px"></div>
<div class="brk b" style="left:655px;top:341px;width:101px"></div>
<div class="brk b" style="left:812px;top:341px;width:101px"></div>
<div class="btn" style="left:661px;top:227px">BUY STOP</div>
<div class="btn r" style="left:661px;top:253px">SELL STOP</div>
<div class="a" style="left:661px;top:283px;width:86px;height:1px;background:#1aa0e0"></div>
<div class="btn" style="left:661px;top:296px">BUY LIMIT</div>
<div class="btn r" style="left:661px;top:323px">SELL LIMIT</div>
<div class="btn" style="left:817px;top:227px">BUY STOP</div>
<div class="btn r" style="left:817px;top:253px">SELL STOP</div>
<div class="a" style="left:818px;top:283px;width:86px;height:1px;background:#1aa0e0"></div>
<div class="btn" style="left:817px;top:296px">BUY LIMIT</div>
<div class="btn r" style="left:817px;top:323px">SELL LIMIT</div>
<svg class="a" style="left:760px;top:256px" width="52" height="52">
<circle cx="26" cy="26" r="25" fill="#4a7a10"/><circle cx="26" cy="26" r="21" fill="#5a9a18"/>
<circle cx="26" cy="26" r="17" fill="#c8d8e0"/><circle cx="26" cy="26" r="13" fill="#3a6ab8"/>
<circle cx="26" cy="26" r="9" fill="#e0e8f0"/><circle cx="26" cy="26" r="4" fill="#d02020"/>
</svg>

<div class="brk t" style="left:645px;top:384px;width:116px"></div>
<div class="brk b" style="left:645px;top:423px;width:116px"></div>
<div class="brk t" style="left:808px;top:384px;width:116px"></div>
<div class="brk b" style="left:808px;top:423px;width:116px"></div>
<svg class="a" style="left:646px;top:386px" width="280" height="44">
<rect x="1" y="1" width="17" height="17" fill="#2a3038" stroke="#555"/><path d="M4 9l4 5 8-11" stroke="#1aa0f0" stroke-width="3" fill="none"/>
<rect x="94" y="1" width="18" height="18" fill="#2a3038" stroke="#555"/><path d="M96 11c3-7 6-7 7 0s5 6 7-2" stroke="#d8f000" stroke-width="2.5" fill="none"/>
<rect x="166" y="1" width="17" height="17" fill="#2a3038" stroke="#555"/><path d="M169 9l4 5 8-11" stroke="#1aa0f0" stroke-width="3" fill="none"/>
<rect x="257" y="1" width="18" height="18" fill="#2a3038" stroke="#555"/><path d="M259 11c3-7 6-7 7 0s5 6 7-2" stroke="#d8f000" stroke-width="2.5" fill="none"/>
</svg>
<div class="wt" style="left:668px;top:385px;font-size:15px">StopLoss</div>
<div class="wt" style="left:833px;top:385px;font-size:15px">TakeProfit</div>
<div class="pm" style="left:655px;top:400px;font-size:24px">–</div>
<div class="a" style="left:675px;top:408px;width:53px;height:19px;background:#fff;font-size:18px;line-height:19px;text-align:center">300</div>
<div class="pm" style="left:737px;top:396px;font-size:30px;font-weight:normal">+</div>
<div class="pm" style="left:819px;top:400px;font-size:24px">–</div>
<div class="a" style="left:840px;top:408px;width:53px;height:19px;background:#fff;font-size:18px;line-height:19px;text-align:center">200</div>
<div class="pm" style="left:901px;top:396px;font-size:30px;font-weight:normal">+</div>

<div class="brk t" style="left:650px;top:456px;width:79px"></div>
<div class="brk b" style="left:650px;top:495px;width:79px"></div>
<div class="brk t" style="left:746px;top:456px;width:79px"></div>
<div class="brk b" style="left:746px;top:495px;width:79px"></div>
<div class="brk t" style="left:842px;top:456px;width:79px"></div>
<div class="brk b" style="left:842px;top:495px;width:79px"></div>
<div class="wt" style="left:660px;top:462px;font-size:15px">Distance</div>
<div class="wt" style="left:770px;top:462px;font-size:15px">Lots</div>
<div class="wt" style="left:861px;top:462px;font-size:15px">Grids</div>
<div class="pm" style="left:654px;top:471px;font-size:22px">–</div>
<div class="wt" style="left:683px;top:480px;font-size:13px">25</div>
<div class="pm" style="left:712px;top:466px;font-size:30px;font-weight:normal">+</div>
<div class="pm" style="left:750px;top:471px;font-size:22px">–</div>
<div class="wt" style="left:773px;top:480px;font-size:13px">1.0</div>
<div class="pm" style="left:807px;top:466px;font-size:30px;font-weight:normal">+</div>
<div class="pm" style="left:845px;top:471px;font-size:22px">–</div>
<div class="wt" style="left:877px;top:480px;font-size:13px">1</div>
<div class="pm" style="left:903px;top:466px;font-size:30px;font-weight:normal">+</div>
<div class="a" style="left:640px;top:516px;width:295px;height:22px;background:#1e2226;color:#1a7fd0;font-size:13px;line-height:22px;text-align:center">VirtualTradePad by Expforex 2008-2020</div>
</body></html>
